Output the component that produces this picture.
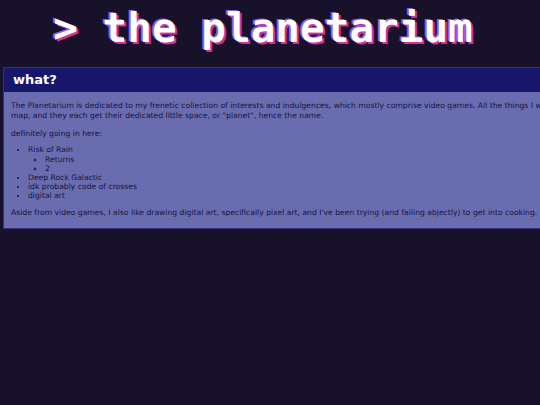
import React from "react";

export default function App() {
  return (
    <div className="min-h-[405px] w-[540px] overflow-hidden bg-[#171129]">
      <h1
        className="pr-[14px] pt-[4px] text-center text-[41px] font-bold leading-[48px] text-white"
        style={{
          fontFamily: '"DejaVu Sans Mono", monospace',
          textShadow: "-2px -1px 0 #8a5cf0, 2px 2px 0 #d030a0",
        }}
      >
        &gt; the planetarium
      </h1>
      <div className="ml-[3px] mt-[15px] w-[620px] border border-[#35307a] bg-[#6a6cb0]">
        <div
          className="h-[24px] bg-[#17166b] pl-[9px] text-[13px] font-bold leading-[24px] text-white"
          style={{ fontFamily: '"DejaVu Sans", sans-serif' }}
        >
          what?
        </div>
        <div
          className="px-[7px] pb-[11px] pt-[9px] text-[7.65px] leading-[9.3px] text-[#15143a]"
          style={{ fontFamily: '"DejaVu Sans", Verdana, sans-serif' }}
        >
          <p className="whitespace-nowrap leading-[10px]">
            The Planetarium is dedicated to my frenetic collection of interests and indulgences, which mostly comprise video games. All the things I want to talk about are placed on a
            <br />
            map, and they each get their dedicated little space, or "planet", hence the name.
          </p>
          <p className="mt-[8px]">definitely going in here:</p>
          <ul className="mt-[7px] list-disc pl-[17px] leading-[9.2px]">
            <li>
              Risk of Rain
              <ul className="list-[circle] pl-[17px]">
                <li>Returns</li>
                <li>2</li>
              </ul>
            </li>
            <li>Deep Rock Galactic</li>
            <li>idk probably code of crosses</li>
            <li>digital art</li>
          </ul>
          <p className="mt-[7px] whitespace-nowrap">
            Aside from video games, I also like drawing digital art, specifically pixel art, and I've been trying (and failing abjectly) to get into cooking.
          </p>
        </div>
      </div>
    </div>
  );
}
